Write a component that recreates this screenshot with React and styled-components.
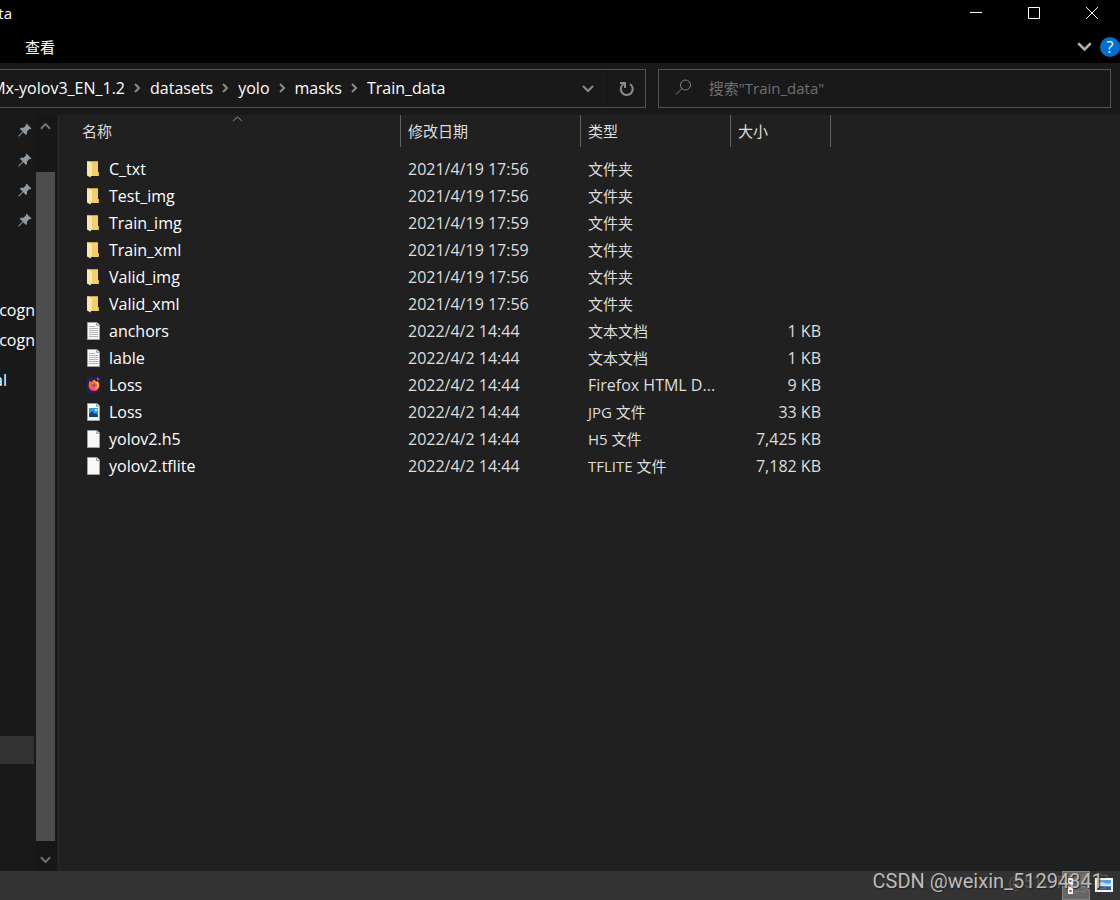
import React from 'react'
import styled, { createGlobalStyle } from 'styled-components'

const GlobalStyle = createGlobalStyle`
  * {
    box-sizing: border-box;
  }
  body {
    margin: 0;
    background: #202020;
    color: #fff;
    font-family: 'Open Sans', 'Noto Sans CJK SC', sans-serif;
    font-size: 15px;
    line-height: 20px;
  }
  button {
    border: none;
    background: none;
    padding: 0;
    color: inherit;
    font: inherit;
    display: flex;
    align-items: center;
    justify-content: center;
  }
  svg {
    display: block;
    flex: none;
  }
`

const Window = styled.div`
  min-height: 100vh;
  display: flex;
  flex-direction: column;
  overflow: hidden;
`

const TitleBar = styled.header`
  height: 26px;
  display: flex;
  align-items: center;
  justify-content: space-between;
  background: #000;
`

const WindowTitle = styled.h1`
  width: 12px;
  margin: 0;
  display: flex;
  justify-content: flex-end;
  overflow: hidden;
  font-size: 15px;
  font-weight: 400;
`

const WindowButtons = styled.div`
  display: flex;
`

const WindowButton = styled.button`
  width: 58px;
  height: 26px;
  padding-left: 2px;
`

const Ribbon = styled.div`
  height: 37px;
  padding: 5px 0 0 25px;
  display: flex;
  align-items: center;
  justify-content: space-between;
  background: #000;
`

const RibbonActions = styled.div`
  display: flex;
  align-items: center;
  gap: 8px;
`

const HelpButton = styled.button`
  width: 20px;
  height: 20px;
  border-radius: 50%;
  background: #0070d0;
  font-size: 16px;
`

const AddressRow = styled.div`
  display: flex;
  gap: 12px;
  padding: 6px 9px 7px 0;
  background: #191919;
`

const AddressBox = styled.div`
  flex: 20 1 0;
  min-width: 0;
  height: 39px;
  display: flex;
  align-items: center;
  border: 1px solid #535353;
  border-left: none;
`

const Crumbs = styled.nav`
  flex: 1;
  min-width: 0;
  padding-bottom: 1px;
  display: flex;
  align-items: center;
  overflow: hidden;
  font-size: 16px;
  white-space: nowrap;

  svg {
    margin: 0 9px;
  }
`

const Crumb = styled.a`
  flex: none;
  width: ${(props) => (props.$clipped ? '125px' : 'auto')};
  display: flex;
  justify-content: flex-end;
  overflow: hidden;
  color: #fff;
  text-decoration: none;
`

const AddressButton = styled.button`
  width: 38px;
  height: 37px;
  padding-left: ${(props) => (props.$divided ? 2 : 0)}px;
  border-left: ${(props) => (props.$divided ? '1px solid #151515' : 'none')};
`

const SearchBox = styled.label`
  flex: 13 1 0;
  min-width: 0;
  height: 39px;
  padding: 0 16px 2px;
  display: flex;
  align-items: center;
  gap: 16px;
  border: 1px solid #535353;
`

const SearchInput = styled.input`
  flex: 1;
  min-width: 0;
  padding: 0;
  border: none;
  outline: none;
  background: transparent;
  color: #fff;
  font: inherit;

  &::placeholder {
    color: #707070;
    opacity: 1;
  }
`

const Body = styled.main`
  flex: 1;
  display: flex;
`

const Sidebar = styled.aside`
  width: 59px;
  display: flex;
  background: #191919;
  border-right: 1px solid #2b2b2b;
`

const Tree = styled.nav`
  width: 36px;
  display: flex;
  flex-direction: column;
  font-size: 16px;
`

const TreeGroup = styled.div`
  margin-top: ${(props) => props.$gap || 0}px;
`

const TreeItem = styled.a`
  height: 30px;
  padding-right: ${(props) => props.$inset || 1}px;
  display: flex;
  align-items: center;
  justify-content: flex-end;
  overflow: hidden;
  color: #fff;
`

const SelectedItem = styled.div`
  width: 34px;
  height: 28px;
  margin: auto 0 107px;
  background: #333;
`

const Scrollbar = styled.div`
  width: 19px;
  display: flex;
  flex-direction: column;
  background: #171717;
`

const ScrollButton = styled.button`
  width: 19px;
  height: ${(props) => props.$height}px;
  padding-top: ${(props) => props.$top || 0}px;
`

const ScrollThumb = styled.div`
  flex: 1;
  margin-top: 35px;
  background: #4d4d4d;
`

const Content = styled.section`
  flex: 1;
  min-width: 0;
`

const Table = styled.table`
  width: 772px;
  table-layout: fixed;
  border-collapse: separate;
  border-spacing: 0;

  thead::after {
    content: '';
    display: block;
    height: 9px;
  }
`

const HeadCell = styled.th`
  position: relative;
  height: 32px;
  padding: 0 0 0 ${(props) => (props.$first ? 23 : 7)}px;
  border-right: 1px solid #636363;
  color: #dedede;
  font-weight: 400;
  text-align: left;
`

const SortMark = styled.span`
  position: absolute;
  top: 0;
  left: 173px;
`

const Cell = styled.td`
  height: 27px;
  padding: 0 10px 2px ${(props) => (props.$first ? 28 : 7)}px;
  color: ${(props) => (props.$first ? '#fff' : '#dedede')};
  font-size: ${(props) => (props.$small ? 15 : 16)}px;
  text-align: ${(props) => (props.$right ? 'right' : 'left')};
  white-space: nowrap;
`

const FileName = styled.span`
  display: flex;
  align-items: center;
  gap: 8px;
`

const StatusBar = styled.footer`
  position: relative;
  height: 29px;
  padding-right: 7px;
  display: flex;
  justify-content: flex-end;
  gap: 4px;
  background: #333;
`

const ViewButton = styled.button`
  width: ${(props) => (props.$active ? 28 : 19)}px;
  height: 29px;
  padding-bottom: ${(props) => (props.$active ? 0 : 2)}px;
  border: ${(props) => (props.$active ? '1px solid #838383' : 'none')};
  background: ${(props) => (props.$active ? '#666' : 'none')};
`

const Watermark = styled.span`
  position: absolute;
  right: ${(props) => (props.$faint ? 11 : 17)}px;
  top: ${(props) => (props.$faint ? 1 : 0)}px;
  color: ${(props) => (props.$faint ? 'rgba(190, 190, 190, 0.25)' : '#bcbcbc')};
  font-family: Roboto, 'Noto Sans CJK SC', sans-serif;
  font-size: ${(props) => (props.$faint ? 17 : 20)}px;
  text-shadow: ${(props) => (props.$faint ? 'none' : '1px 1px 1px #222')};
  white-space: nowrap;
  pointer-events: none;
`

const paths = {
  up: 'M1 7l5-5 5 5',
  down: 'M1 1l5 5 5-5',
  right: 'M1 1l4 4-4 4',
}

const Chevron = ({ to, width = 12, height = 8, stroke = 2, color = '#8c8c8c' }) => (
  <svg
    width={width}
    height={height}
    viewBox={to === 'right' ? '0 0 7 10' : '0 0 12 8'}
    fill="none"
    stroke={color}
    strokeWidth={stroke}
  >
    <path d={paths[to]} />
  </svg>
)

const PinIcon = () => (
  <svg width="14" height="14" viewBox="0 0 14 14" fill="#8f9aa3">
    <path d="M8.5 0.5L13.5 5.5L12 6.2L11.4 6L9 8.6L9 11L8 12L5.2 9.2L1 13.4L0.4 13.4L0.4 12.8L4.6 8.6L1.8 5.8L2.8 4.8L5.4 4.8L8 2.5L7.8 1.4Z" />
  </svg>
)

const FolderIcon = () => (
  <svg width="14" height="18" viewBox="0 0 14 18">
    <path d="M1 1H11V12H12V16H3Z" fill="#f2cf6b" />
    <path d="M1 1H11V2H1Z" fill="#c9a24c" />
    <path d="M11 12H12V16H11Z" fill="#d9b04f" />
    <path d="M0 1L5 3V14L3.500 17.500L0 15.500Z" fill="#fde7a2" />
  </svg>
)

const Sheet = ({ children, fill = '#f8f8f8' }) => (
  <svg width="14" height="18" viewBox="0 0 14 18">
    <path d="M0.500 0.500H10L12.500 3V17.500H0.500Z" fill={fill} stroke="#a0a0a0" />
    <path d="M9.500 0.500V3.500H12.500" fill="#ddd" stroke="#a0a0a0" />
    {children}
  </svg>
)

const TextIcon = () => (
  <Sheet>
    <path
      d="M2 4.500H8M2 6.500H11M2 8.500H11M2 10.500H11M2 12.500H11M2 14.500H11"
      stroke="#b4b4b4"
    />
  </Sheet>
)

const ImageIcon = () => (
  <Sheet>
    <path d="M2 5H11V14H2Z" fill="#2ba0e8" />
    <path d="M2 11L5 8L8 11L9 10L11 12V14H2Z" fill="#0d4684" />
    <circle cx="9" cy="7" r="1" fill="#fff" />
  </Sheet>
)

const FirefoxIcon = () => (
  <svg width="14" height="18" viewBox="0 0 14 18">
    <path d="M0 1H10L13 4V17H0Z" fill="#2a1b5a" />
    <path d="M10 1L13 4H10Z" fill="#9059ff" />
    <path
      d="M2.500 4.500L4.200 6C5 5.500 5.500 4.600 7 3.500C7 5 9 5.600 10 6.200L10.500 5C12 6.700 12.400 8 12.200 10C11.800 13 9.600 15 7 15C4 15 1.800 12.800 1.700 10C1.600 8 2.200 6.500 2.500 4.500Z"
      fill="#ff6a2b"
    />
    <path
      d="M7 3.500C6.500 6 9.500 6 10 8.500C10.500 11 9 12.500 7.500 13.200C10.500 13.500 12 11 12.200 9.500C12 7 11 6 10.500 5L10 6.200C9 5.600 8 5 7 3.500Z"
      fill="#ffc83d"
    />
    <path
      d="M1.700 10C2 13 4.500 15 7 15C8.500 15 9.500 14.500 10.200 14C7 14 3.500 13 1.700 10Z"
      fill="#ff2f6d"
    />
    <circle cx="6.800" cy="9.500" r="1.500" fill="#8142d0" />
  </svg>
)

const icons = {
  folder: FolderIcon,
  text: TextIcon,
  firefox: FirefoxIcon,
  image: ImageIcon,
  file: Sheet,
}

const crumbs = ['Mx-yolov3_EN_1.2', 'datasets', 'yolo', 'masks', 'Train_data']

const files = [
  { icon: 'folder', name: 'C_txt', date: '2021/4/19 17:56', type: '文件夹' },
  { icon: 'folder', name: 'Test_img', date: '2021/4/19 17:56', type: '文件夹' },
  { icon: 'folder', name: 'Train_img', date: '2021/4/19 17:59', type: '文件夹' },
  { icon: 'folder', name: 'Train_xml', date: '2021/4/19 17:59', type: '文件夹' },
  { icon: 'folder', name: 'Valid_img', date: '2021/4/19 17:56', type: '文件夹' },
  { icon: 'folder', name: 'Valid_xml', date: '2021/4/19 17:56', type: '文件夹' },
  { icon: 'text', name: 'anchors', date: '2022/4/2 14:44', type: '文本文档', size: '1 KB' },
  { icon: 'text', name: 'lable', date: '2022/4/2 14:44', type: '文本文档', size: '1 KB' },
  { icon: 'firefox', name: 'Loss', date: '2022/4/2 14:44', type: 'Firefox HTML D...', size: '9 KB' },
  { icon: 'image', name: 'Loss', date: '2022/4/2 14:44', type: 'JPG 文件', size: '33 KB' },
  { icon: 'file', name: 'yolov2.h5', date: '2022/4/2 14:44', type: 'H5 文件', size: '7,425 KB' },
  { icon: 'file', name: 'yolov2.tflite', date: '2022/4/2 14:44', type: 'TFLITE 文件', size: '7,182 KB' },
]

const FileRow = ({ file }) => {
  const Icon = icons[file.icon]
  return (
    <tr>
      <Cell $first>
        <FileName>
          <Icon />
          {file.name}
        </FileName>
      </Cell>
      <Cell>{file.date}</Cell>
      <Cell $small={file.type.includes('文')}>{file.type}</Cell>
      <Cell $right>{file.size}</Cell>
    </tr>
  )
}

const App = () => (
  <Window>
    <GlobalStyle />
    <TitleBar>
      <WindowTitle>ta</WindowTitle>
      <WindowButtons>
        <WindowButton aria-label="Minimize">
          <svg width="12" height="12" stroke="#fff">
            <path d="M0 5.500H12" />
          </svg>
        </WindowButton>
        <WindowButton aria-label="Maximize">
          <svg width="12" height="12" fill="none" stroke="#fff">
            <path d="M0.500 0.500H11.500V11.500H0.500Z" />
          </svg>
        </WindowButton>
        <WindowButton aria-label="Close">
          <svg width="12" height="12" stroke="#fff">
            <path d="M0 0L12 12M12 0L0 12" />
          </svg>
        </WindowButton>
      </WindowButtons>
    </TitleBar>
    <Ribbon>
      <button>查看</button>
      <RibbonActions>
        <button aria-label="Expand ribbon">
          <Chevron to="down" width={15} height={10} color="#b0b0b0" />
        </button>
        <HelpButton>?</HelpButton>
      </RibbonActions>
    </Ribbon>
    <AddressRow>
      <AddressBox>
        <Crumbs>
          {crumbs.map((crumb, index) => (
            <React.Fragment key={crumb}>
              {index > 0 && <Chevron to="right" width={7} height={10} />}
              <Crumb href="#" $clipped={index === 0}>
                {crumb}
              </Crumb>
            </React.Fragment>
          ))}
        </Crumbs>
        <AddressButton aria-label="History">
          <Chevron to="down" />
        </AddressButton>
        <AddressButton $divided aria-label="Refresh">
          <svg width="16" height="16" fill="none" stroke="#8c8c8c" strokeWidth="2">
            <path d="M11 3A6 6 0 1 1 4.500 3" />
            <path d="M1 2H6V7" />
          </svg>
        </AddressButton>
      </AddressBox>
      <SearchBox>
        <svg width="18" height="17" fill="none" stroke="#858585">
          <circle cx="10.500" cy="6" r="5" />
          <path d="M7 9.500L1 15.500" />
        </svg>
        <SearchInput placeholder={'搜索"Train_data"'} aria-label="搜索" />
      </SearchBox>
    </AddressRow>
    <Body>
      <Sidebar>
        <Tree>
          <TreeGroup>
            {[1, 2, 3, 4].map((pin) => (
              <TreeItem key={pin} href="#" $inset={4}>
                <PinIcon />
              </TreeItem>
            ))}
          </TreeGroup>
          <TreeGroup $gap={60}>
            <TreeItem>cogn</TreeItem>
            <TreeItem>cogn</TreeItem>
          </TreeGroup>
          <TreeGroup $gap={10}>
            <TreeItem $inset={29}>al</TreeItem>
          </TreeGroup>
          <SelectedItem />
        </Tree>
        <Scrollbar>
          <ScrollButton $height={22} aria-label="Scroll up">
            <Chevron to="up" width={11} color="#777" />
          </ScrollButton>
          <ScrollThumb />
          <ScrollButton $height={30} $top={8} aria-label="Scroll down">
            <Chevron to="down" width={11} color="#777" />
          </ScrollButton>
        </Scrollbar>
      </Sidebar>
      <Content>
        <Table>
          <colgroup>
            <col width="342" />
            <col width="180" />
            <col width="150" />
            <col width="100" />
          </colgroup>
          <thead>
            <tr>
              <HeadCell $first>
                名称
                <SortMark>
                  <Chevron to="up" width={11} height={7} stroke={1} color="#a8a8a8" />
                </SortMark>
              </HeadCell>
              <HeadCell>修改日期</HeadCell>
              <HeadCell>类型</HeadCell>
              <HeadCell>大小</HeadCell>
            </tr>
          </thead>
          <tbody>
            {files.map((file) => (
              <FileRow key={file.name + file.type} file={file} />
            ))}
          </tbody>
        </Table>
      </Content>
    </Body>
    <StatusBar>
      <ViewButton $active aria-label="Details view">
        <svg width="17" height="16">
          <path d="M0 0H5V16H0Z" fill="#f4f4f4" />
          <path d="M1.500 2H3.500V4H1.500Z" fill="#3a6ea5" />
          <path d="M1.500 7H3.500V9H1.500Z" fill="#8a3b3b" />
          <path d="M1.500 12H3.500V14H1.500Z" fill="#c03020" />
          <path
            d="M7 3.500H11M13 3.500H17M7 8.500H11M13 8.500H17M7 13.500H11M13 13.500H17"
            stroke="#808080"
          />
        </svg>
      </ViewButton>
      <ViewButton aria-label="Large icons view">
        <svg width="18" height="14">
          <path d="M0 0H18V14H0Z" fill="#f4f4f4" />
          <path d="M2 2H16V12H2Z" fill="#5b9be0" />
          <path d="M2 6L7 4L12 6L16 5V8H2Z" fill="#cfe4f5" />
          <path d="M2 8L16 9V12H2Z" fill="#2f5f8c" />
        </svg>
      </ViewButton>
      <Watermark $faint>@51CTO博客</Watermark>
      <Watermark>CSDN @weixin_51294341</Watermark>
    </StatusBar>
  </Window>
)

export default App
